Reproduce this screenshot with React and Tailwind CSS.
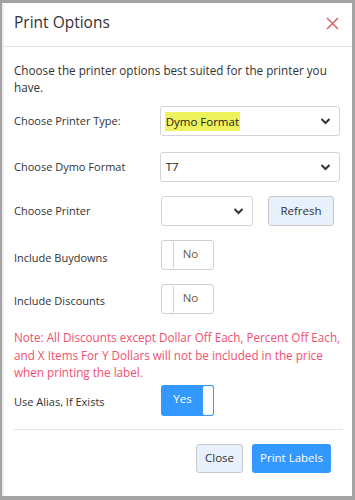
import React from "react";

const font = { fontFamily: '"Open Sans", "Noto Sans", sans-serif' };

function Chevron() {
  return (
    <svg width="11" height="8" viewBox="0 0 11 8" className="absolute right-[8px] top-1/2 -translate-y-1/2">
      <path d="M1.5 2 L5.5 6 L9.5 2" fill="none" stroke="#333" strokeWidth="2" />
    </svg>
  );
}

function Select({ children, className }) {
  return (
    <div className={"relative h-[30px] border border-[#d4d4d4] rounded-[3px] bg-white flex items-center pl-[4px] " + className}>
      {children}
      <Chevron />
    </div>
  );
}

function ToggleNo() {
  return (
    <div className="w-[53px] h-[30px] border border-[#d0d0d0] rounded-[3px] bg-white flex items-stretch">
      <div className="w-[12px] border-r border-[#d0d0d0] rounded-[3px]" />
      <div className="flex-1 flex items-center justify-center text-[11.5px] text-[#6b5a3c] pr-[6px] pb-[2px]">No</div>
    </div>
  );
}

function ToggleYes() {
  return (
    <div className="w-[53px] h-[31px] rounded-[3px] bg-[#3399ff] flex items-stretch">
      <div className="flex-1 flex items-center justify-center text-[11.5px] text-white pl-[2px] pb-[2px]">Yes</div>
      <div className="w-[12px] bg-white border border-[#3399ff] rounded-[3px]" />
    </div>
  );
}

function Row({ label, children, h }) {
  return (
    <div className={"flex items-center " + h}>
      <div className="w-[147px] text-[11px] text-[#333]">{label}</div>
      {children}
    </div>
  );
}

export default function App() {
  return (
    <div className="w-[355px] h-[500px] bg-[#a3a3a3] pt-[3px] pl-[2px] pr-[3px] pb-[4px]" style={font}>
      <div className="w-full h-full bg-white shadow-[inset_3px_0_3px_-2px_rgba(0,0,0,0.12)] flex flex-col">
        <div className="h-[44px] border-b border-[#e3e3e3] flex items-center justify-between pl-[12px] pr-[13px]">
          <div className="text-[15.5px] text-[#333] pb-[3px]">Print Options</div>
          <svg width="13" height="13" viewBox="0 0 13 13" className="mb-[3px]">
            <path d="M1 1 L12 12 M12 1 L1 12" stroke="#e06666" strokeWidth="1.6" fill="none" />
          </svg>
        </div>
        <div className="px-[12px] pt-[15px] text-[11.7px] leading-[17px] text-[#333] whitespace-nowrap">
          Choose the printer options best suited for the printer you
          <br />
          have.
        </div>
        <div className="px-[12px] pt-[10px] flex flex-col">
          <Row label="Choose Printer Type:" h="h-[30px]">
            <Select className="w-[182px]">
              <span className="bg-[#eef25c] text-[11.5px] text-[#222] px-[1px] py-[2px] leading-[15px]">Dymo Format</span>
            </Select>
          </Row>
          <div className="h-[16px]" />
          <Row label="Choose Dymo Format" h="h-[30px]">
            <Select className="w-[182px]">
              <span className="text-[11.5px] text-[#222] pl-[1px]">T7</span>
            </Select>
          </Row>
          <div className="h-[14px]" />
          <Row label="Choose Printer" h="h-[30px]">
            <Select className="w-[92px]"><span /></Select>
            <div className="ml-[15px] w-[66px] h-[30px] border border-[#c8c8c8] rounded-[3px] bg-[#e8f1fb] flex items-center justify-center text-[11.5px] text-[#333]">
              Refresh
            </div>
          </Row>
          <div className="h-[14px]" />
          <Row label={<span className="block pt-[7px]">Include Buydowns</span>} h="h-[30px]">
            <ToggleNo />
          </Row>
          <div className="h-[14px]" />
          <Row label={<span className="block pt-[5px]">Include Discounts</span>} h="h-[30px]">
            <ToggleNo />
          </Row>
          <div className="pt-[15px] text-[11.7px] leading-[17.5px] text-[#f0506e] whitespace-nowrap">
            Note: All Discounts except Dollar Off Each, Percent Off Each,
            <br />
            and X Items For Y Dollars will not be included in the price
            <br />
            when printing the label.
          </div>
          <div className="h-[3px]" />
          <Row label={<span className="block pt-[4px]">Use Alias, If Exists</span>} h="h-[31px]">
            <ToggleYes />
          </Row>
          <div className="mt-[13px] border-t border-[#e3e3e3] mr-[-3px]" />
          <div className="flex justify-end gap-[9px] pt-[14px] pr-[9px]">
            <div className="w-[47px] h-[29px] border border-[#c8c8c8] rounded-[3px] bg-[#e8f1fb] flex items-center justify-center text-[11.5px] text-[#333]">
              Close
            </div>
            <div className="w-[79px] h-[29px] rounded-[3px] bg-[#3399ff] flex items-center justify-center text-[11.5px] text-white">
              Print Labels
            </div>
          </div>
        </div>
      </div>
    </div>
  );
}
